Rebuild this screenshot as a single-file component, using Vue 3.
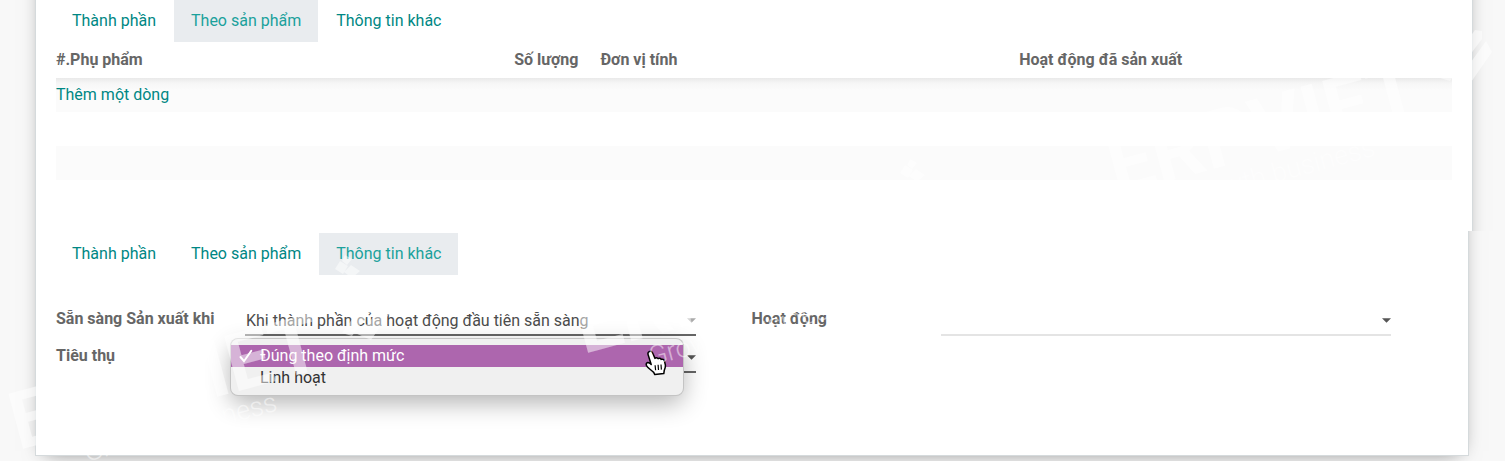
<script setup>
import { ref } from 'vue'

const tabs = ['Thành phần', 'Theo sản phẩm', 'Thông tin khác']
const productTab = ref(1)
const infoTab = ref(2)
const readiness = ref('Khi thành phần của hoạt động đầu tiên sẵn sàng')
const options = ['Đúng theo định mức', 'Linh hoạt']
const consumption = ref(options[0])
const operation = ref('')
const marks = [
  'translate(22 449)',
  'translate(587 353)',
  'translate(1120 194)',
]
</script>

<template>
  <main class="page">
    <section class="sheet sheet-products">
      <nav class="tabs" role="tablist">
        <button
          v-for="(tab, i) in tabs"
          :key="tab"
          type="button"
          role="tab"
          class="tab"
          :class="{ active: i === productTab }"
          :aria-selected="i === productTab"
          @click="productTab = i"
        >{{ tab }}</button>
      </nav>
      <table class="lines">
        <colgroup>
          <col class="col-name" />
          <col class="col-qty" />
          <col class="col-unit" />
          <col class="col-op" />
        </colgroup>
        <thead>
          <tr>
            <th>#.Phụ phẩm</th>
            <th class="number">Số lượng</th>
            <th class="unit">Đơn vị tính</th>
            <th>Hoạt động đã sản xuất</th>
          </tr>
        </thead>
        <tbody>
          <tr><td colspan="4"><a href="#">Thêm một dòng</a></td></tr>
          <tr><td colspan="4"></td></tr>
          <tr><td colspan="4"></td></tr>
          <tr><td colspan="4"></td></tr>
        </tbody>
      </table>
    </section>

    <section class="sheet sheet-info">
      <nav class="tabs" role="tablist">
        <button
          v-for="(tab, i) in tabs"
          :key="tab"
          type="button"
          role="tab"
          class="tab"
          :class="{ active: i === infoTab }"
          :aria-selected="i === infoTab"
          @click="infoTab = i"
        >{{ tab }}</button>
      </nav>
      <form class="fields" @submit.prevent>
        <label for="readiness">Sẵn sàng Sản xuất khi</label>
        <div class="field">
          <select id="readiness" v-model="readiness">
            <option>{{ readiness }}</option>
          </select>
          <svg class="caret faded" viewBox="0 0 10 5"><path d="M0 0h10L5 5z" /></svg>
        </div>
        <label for="operation" class="second">Hoạt động</label>
        <div class="field light">
          <input id="operation" v-model="operation" type="text" autocomplete="off" />
          <svg class="caret" viewBox="0 0 10 5"><path d="M0 0h10L5 5z" /></svg>
        </div>
        <label for="consumption">Tiêu thụ</label>
        <div class="field">
          <select id="consumption" v-model="consumption">
            <option v-for="o in options" :key="o">{{ o }}</option>
          </select>
          <svg class="caret" viewBox="0 0 10 5"><path d="M0 0h10L5 5z" /></svg>
          <ul class="menu" role="listbox">
            <li
              v-for="o in options"
              :key="o"
              role="option"
              :aria-selected="o === consumption"
              :class="{ chosen: o === consumption }"
              @click="consumption = o"
            >
              <svg v-if="o === consumption" class="check" viewBox="0 0 14 14"><path d="M1.5 8 5 12.2 12.3 1.8" /></svg>
              {{ o }}
            </li>
          </ul>
          <svg class="pointer" viewBox="0 0 22 26">
            <path d="M4.2 1.6C5.6.8 6.9 1.5 7.5 2.8L10 8.4C10.7 7.4 12.4 7.4 13.1 8.7C14 7.8 15.7 8.1 16.2 9.4C17.6 8.7 19 9.5 19.4 11L20.3 14.6C20.8 17 20 18.5 19.3 20.2L18.8 23.6L9.8 24.6L8.7 22.4C6.7 20.6 4.5 19 2.7 17.2C1.6 16.1.9 14.2 1.6 13.2C2.6 12 4.6 12.8 6.2 14.4L3.2 5C2.7 3.6 3.1 2.2 4.2 1.6Z" />
            <path class="knuckles" d="M10.1 15.3l.5 5M13.1 14.8l.4 5.2M16 14.5l.4 5.1" />
          </svg>
        </div>
      </form>
    </section>

    <svg class="watermark" viewBox="0 0 1505 461" preserveAspectRatio="xMinYMin meet" aria-hidden="true">
      <g v-for="m in marks" :key="m" :transform="m">
        <g transform="rotate(-15)">
          <text class="brand" x="-4" y="0">ERPVIET</text>
          <text class="motto" x="59" y="29">Growth business</text>
        </g>
        <path d="M318-188l8 5-5 8-8-5zM329-184l9 6-8 7-8-6zM323-194l7 4-5 6-5-4z" />
        <path d="M362-163l-7-1-35 48 10 3 32-42z" />
        <path d="M366-153l6 11-23 33-23-10 20-6z" />
      </g>
    </svg>
  </main>
</template>

<style>
body {
  margin: 0;
  background: #f8f8f8;
}
</style>

<style scoped>
.page {
  position: relative;
  display: flex;
  flex-direction: column;
  box-sizing: border-box;
  min-height: 461px;
  overflow: hidden;
  font-family: Roboto, "Noto Sans", sans-serif;
  font-size: 16px;
  line-height: 24px;
  color: #666;
}
.sheet {
  box-sizing: border-box;
  background: #fff;
  border: 1px solid #d5dadc;
  padding: 0 20px;
  box-shadow: 0 5px 20px -10px rgba(0, 0, 0, 0.6);
}
.sheet-products {
  margin: -41px 32px -40px 35px;
  padding-top: 39px;
  padding-bottom: 56px;
  clip-path: inset(40px -32px 40px -35px);
}
.sheet-info {
  position: relative;
  margin: -40px 36px 0 35px;
  padding-top: 41px;
  padding-bottom: 82px;
  clip-path: inset(40px -36px -40px -35px);
}
.sheet-products .tabs {
  padding-top: 1px;
}
.tabs {
  display: flex;
  gap: 1px;
  margin-left: -1px;
}
.tab {
  height: 42px;
  padding: 0 17px;
  border: 0;
  background: none;
  font: inherit;
  color: #008784;
  cursor: pointer;
}
.tab.active {
  background: #e9ecef;
  color: #1ba19c;
}
a {
  color: #008784;
  text-decoration: none;
}
.lines {
  width: 100%;
  table-layout: fixed;
  border-collapse: collapse;
}
.col-name { width: 31%; }
.col-qty { width: 7%; }
.col-unit { width: 31%; }
.lines th {
  height: 36px;
  padding: 0;
  text-align: left;
  font-weight: 700;
}
.lines th.number {
  text-align: right;
  padding-right: 8px;
}
.lines th.unit {
  padding-left: 14px;
}
.lines td {
  height: 34px;
  padding: 0;
}
.lines td a {
  display: block;
  line-height: 32px;
}
.lines tbody tr:nth-child(odd) {
  background: #fbfbfb;
}
.lines tbody tr:first-child {
  background: linear-gradient(#e9e9e9, #f6f6f6 5px, #fbfbfb 12px);
}
.fields {
  display: grid;
  grid-template-columns: 189px minmax(0, 1fr) 245px minmax(0, 1fr);
  row-gap: 6px;
  margin: 30px 57px 0 0;
}
.fields label {
  font-weight: 700;
  padding-top: 2px;
}
.fields .second {
  padding-left: 56px;
}
.field {
  position: relative;
  border-bottom: 2px solid #666;
}
.field.light {
  border-color: #e4e4e4;
}
.field select,
.field input {
  display: block;
  box-sizing: border-box;
  width: 100%;
  height: 29px;
  margin: 0;
  padding: 2px 20px 0 1px;
  border: 0;
  outline: 0;
  appearance: none;
  background: none;
  font: inherit;
  color: #4c4c4c;
}
.caret {
  position: absolute;
  right: 0;
  top: 13px;
  width: 9px;
  height: 5px;
  fill: #555;
}
.caret.faded {
  fill: #aaa;
}
.menu {
  position: absolute;
  z-index: 1;
  left: -14px;
  right: 13px;
  top: -3px;
  margin: 0;
  padding: 6px 0;
  list-style: none;
  border-radius: 7px;
  background: #f0f0f0;
  color: #333;
  box-shadow: 0 0 0 1px #c4c4c4, 0 8px 24px rgba(0, 0, 0, 0.3);
}
.menu li {
  position: relative;
  padding-left: 29px;
  line-height: 22px;
}
.menu li.chosen {
  background: #ad66ae;
  color: #fff;
}
.check {
  position: absolute;
  left: 8px;
  top: 4px;
  width: 14px;
  height: 14px;
  fill: none;
  stroke: #fff;
  stroke-width: 2;
  stroke-linecap: round;
}
.pointer {
  position: absolute;
  z-index: 3;
  right: 29px;
  top: 8px;
  width: 22px;
  height: 26px;
  fill: #fff;
  stroke: #000;
  stroke-width: 1.5;
  stroke-linejoin: round;
}
.pointer .knuckles {
  stroke-width: 1.2;
}
.watermark {
  position: absolute;
  z-index: 2;
  top: 0;
  left: 0;
  width: 100%;
  fill: #fff;
  fill-opacity: 0.5;
  pointer-events: none;
}
.brand {
  font-size: 80px;
  font-weight: 700;
}
.motto {
  font-size: 27px;
  font-weight: 300;
}
</style>
